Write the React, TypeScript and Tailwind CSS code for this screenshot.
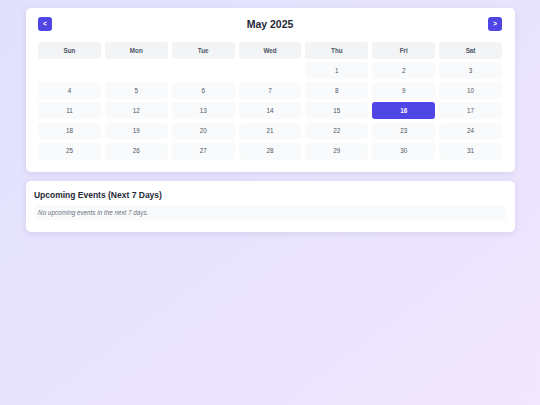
import React from "react";

const days = ["Sun", "Mon", "Tue", "Wed", "Thu", "Fri", "Sat"];

export default function App() {
  const cells: (number | null)[] = [null, null, null, null];
  for (let d = 1; d <= 31; d++) cells.push(d);
  return (
    <div className="min-h-[405px] w-full bg-gradient-to-br from-[#e0e1fc] to-[#f1e6fe] font-['Liberation_Sans',Arial,sans-serif] pt-[8.3px]">
      <div className="mx-auto w-[489px] rounded-[5px] bg-white px-[12.6px] pt-[8.4px] pb-[12.4px] shadow-[0_2px_6px_rgba(80,70,160,0.12)]">
        <div className="flex h-[14.6px] items-center justify-between">
          <button className="flex h-[14.6px] w-[13.6px] items-center justify-center rounded-[3px] bg-[#4f46e5] text-[6.5px] font-bold text-white">
            &lt;
          </button>
          <h2 className="text-[10.5px] font-bold leading-none text-[#1f2937]">May 2025</h2>
          <button className="flex h-[14.6px] w-[13.6px] items-center justify-center rounded-[3px] bg-[#4f46e5] text-[6.5px] font-bold text-white">
            &gt;
          </button>
        </div>
        <div className="mt-[10.6px] grid grid-cols-7 gap-x-[4.1px] gap-y-[3.5px]">
          {days.map((d) => (
            <div
              key={d}
              className="flex h-[16.7px] items-center justify-center rounded-[3px] bg-[#f3f4f6] text-[6.3px] font-bold text-[#4b5563]"
            >
              {d}
            </div>
          ))}
          {cells.map((c, i) =>
            c === null ? (
              <div key={i} className="h-[16.7px]" />
            ) : c === 16 ? (
              <div
                key={i}
                className="flex h-[16.7px] items-center justify-center rounded-[3px] bg-[#4f46e5] text-[6.3px] font-bold text-white"
              >
                {c}
              </div>
            ) : (
              <div
                key={i}
                className="flex h-[16.7px] items-center justify-center rounded-[3px] bg-[#f9fafb] text-[6.3px] text-[#4b5563]"
              >
                {c}
              </div>
            )
          )}
        </div>
      </div>
      <div className="mx-auto mt-[9px] w-[489px] rounded-[5px] bg-white px-[8.4px] pt-[8.4px] pb-[12.4px] shadow-[0_2px_6px_rgba(80,70,160,0.12)]">
        <h3 className="text-[8.5px] font-bold leading-[12.6px] text-[#1f2937]">Upcoming Events (Next 7 Days)</h3>
        <div className="mt-[3px] flex h-[15.2px] items-center rounded-[3px] bg-[#f9fafb] px-[4.2px] text-[6.3px] italic text-[#6b7280]">
          No upcoming events in the next 7 days.
        </div>
      </div>
    </div>
  );
}
